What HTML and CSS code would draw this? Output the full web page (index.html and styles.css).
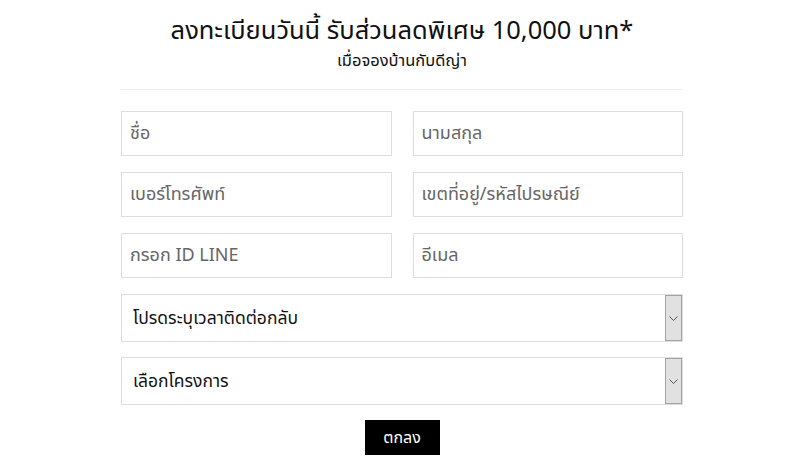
FILE: index.html
```html
<!DOCTYPE html>
<html lang="th">
<head>
    <meta name="viewport" content="width=device-width, initial-scale=1.0">
    <title>ลงทะเบียน</title>
    <link rel="stylesheet" href="styles.css">
</head>
<body>

    <div class="register">
        <!-- Heading -->
        <h1 class="title">ลงทะเบียนวันนี้ รับส่วนลดพิเศษ 10,000 บาท*</h1>
        <p class="subtitle">เมื่อจองบ้านกับดีญ่า</p>
        <hr class="divider">

        <!-- Form -->
        <form class="form">
            <div class="grid">
                <input type="text" class="field" placeholder="ชื่อ">
                <input type="text" class="field" placeholder="นามสกุล">
                <input type="text" class="field" placeholder="เบอร์โทรศัพท์">
                <input type="text" class="field" placeholder="เขตที่อยู่/รหัสไปรษณีย์">
                <input type="text" class="field" placeholder="กรอก ID LINE">
                <input type="text" class="field" placeholder="อีเมล">
            </div>

            <div class="select">
                <span class="select-text">โปรดระบุเวลาติดต่อกลับ</span>
                <span class="select-arrow">
                    <svg width="9" height="5" viewBox="0 0 9 5"><path d="M0.5 0.5 L4.5 4.5 L8.5 0.5" fill="none" stroke="#555" stroke-width="1"/></svg>
                </span>
            </div>

            <div class="select">
                <span class="select-text">เลือกโครงการ</span>
                <span class="select-arrow">
                    <svg width="9" height="5" viewBox="0 0 9 5"><path d="M0.5 0.5 L4.5 4.5 L8.5 0.5" fill="none" stroke="#555" stroke-width="1"/></svg>
                </span>
            </div>

            <div class="actions">
                <button type="button" class="submit">ตกลง</button>
            </div>
        </form>
    </div>

</body>
</html>
```

FILE: styles.css
```css
/* General */
body {
    margin: 0;
    background: #fff;
    font-family: "Noto Sans Thai", "Noto Sans Thai UI", "Noto Sans", "Liberation Sans", sans-serif;
    color: #111;
}

/* Holds everything */
.register {
    width: 562px;
    margin-left: 121px;
    padding-top: 13px;
}

/* Heading */
.title {
    margin: 0;
    text-align: center;
    font-size: 25.5px;
    font-weight: normal;
    line-height: 36px;
}

.subtitle {
    margin: 2px 0 0;
    text-align: center;
    font-size: 16.5px;
    line-height: 20px;
}

.divider {
    border: none;
    border-top: 1px solid #eee;
    margin: 18px 0 21px;
}

/* Inputs */
.grid {
    display: grid;
    grid-template-columns: 1fr 1fr;
    column-gap: 21px;
    row-gap: 16px;
}

.field {
    box-sizing: border-box;
    height: 45px;
    width: 100%;
    border: 1px solid #ddd;
    padding: 0 8px;
    font-family: inherit;
    font-size: 18px;
    color: #333;
    outline: none;
}

.field::placeholder {
    color: #666;
}

/* Dropdowns */
.select {
    box-sizing: border-box;
    display: flex;
    align-items: center;
    height: 48px;
    border: 1px solid #ddd;
    margin-top: 16px;
}

.select + .select {
    margin-top: 15px;
}

.select-text {
    flex: 1;
    padding-left: 11px;
    font-size: 17.5px;
    color: #111;
}

.select-arrow {
    box-sizing: border-box;
    display: flex;
    align-items: center;
    justify-content: center;
    width: 17px;
    height: 46px;
    background: #e1e1e1;
    border: 1px solid #a3a3a3;
}

/* Button */
.actions {
    text-align: center;
    margin-top: 15px;
}

.submit {
    background: #000;
    color: #fff;
    border: none;
    width: 75px;
    height: 35px;
    font-family: inherit;
    font-size: 16px;
    cursor: pointer;
}
```
